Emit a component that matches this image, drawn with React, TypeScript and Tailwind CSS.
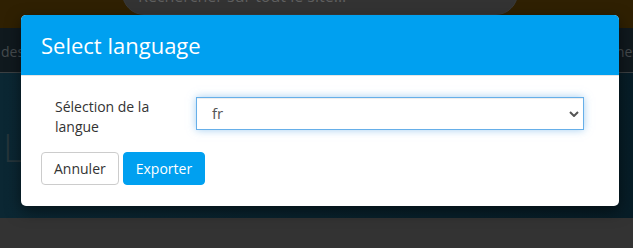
import { Search } from "lucide-react";

const font = { fontFamily: '"Open Sans", "Liberation Sans", sans-serif' };

function Backdrop() {
  return (
    <div className="flex h-full flex-col">
      <div className="h-[28px] bg-[#2f2002]">
        <div className="ml-[122px] mt-[-29px] flex h-[44px] w-[396px] items-start rounded-full border border-[#3a3a3a] bg-[#333333] pl-[15px] pr-[10px] pt-[13px]">
          <span className="flex-1 text-[16px] leading-[22px] text-[#5f5f5f]">Rechercher sur tout le site...</span>
          <Search className="mt-[-4px] h-[14px] w-[14px] text-[#1f1f1f]" strokeWidth={3} />
        </div>
      </div>
      <div className="flex h-[45px] items-center justify-between overflow-hidden whitespace-nowrap border-b border-[#3b4043] bg-[#10191e] text-[14px] text-[#464b4e]">
        <span className="ml-[1px] mt-[2px]">des</span>
        <span className="mr-[-6px] mt-[2px]">mes</span>
      </div>
      <div className="h-[145px] bg-gradient-to-r from-[#0b2733] to-[#071d27] pt-[52px]">
        <span className="ml-[3px] text-[38px] font-light leading-[44px] text-[#26353b]">Lu</span>
      </div>
      <div className="flex-1 bg-[#333333]" />
    </div>
  );
}

export default function App() {
  return (
    <div className="relative h-[248px] w-[633px] overflow-hidden bg-[#333333]" style={font}>
      <Backdrop />

      <div className="absolute left-[21px] top-[15px] w-[598px] overflow-hidden rounded-[5px] bg-white shadow-[0_5px_15px_rgba(0,0,0,0.5)]">
        <div className="flex h-[61px] items-center border-b border-[#e5e5e5] bg-[#00a0f0] px-5">
          <h4 className="text-[22px] leading-[30px] text-white">Select language</h4>
        </div>

        <div className="px-5 pb-[21px] pt-[21px]">
          <div className="flex items-start">
            <label className="w-[155px] pl-[14px] text-[14px] leading-[20px] text-[#333333]">
              Sélection de la langue
            </label>
            <div className="relative mr-[15px] flex-1">
              <select
                defaultValue="fr"
                className="h-[33px] w-full appearance-none rounded-none border border-[#66afe9] bg-white pl-[15px] text-[15px] text-[#555555] shadow-[inset_0_1px_1px_rgba(0,0,0,0.075),0_0_8px_rgba(102,175,233,0.6)] outline-none"
              >
                <option value="fr">fr</option>
                <option value="en">en</option>
              </select>
              <svg
                className="pointer-events-none absolute right-[5px] top-[14px]"
                width="10"
                height="6"
                viewBox="0 0 10 6"
                fill="none"
              >
                <path d="M1 1l4 4 4-4" stroke="#555555" strokeWidth="2" />
              </svg>
            </div>
          </div>

          <div className="mt-[15px] flex gap-[4px]">
            <button className="h-[33px] rounded-[4px] border border-[#cccccc] bg-white px-3 text-[14px] text-[#333333]">
              Annuler
            </button>
            <button className="h-[33px] rounded-[4px] border border-[#00a0f0] bg-[#00a0f0] px-3 text-[14px] text-white">
              Exporter
            </button>
          </div>
        </div>
      </div>
    </div>
  );
}
